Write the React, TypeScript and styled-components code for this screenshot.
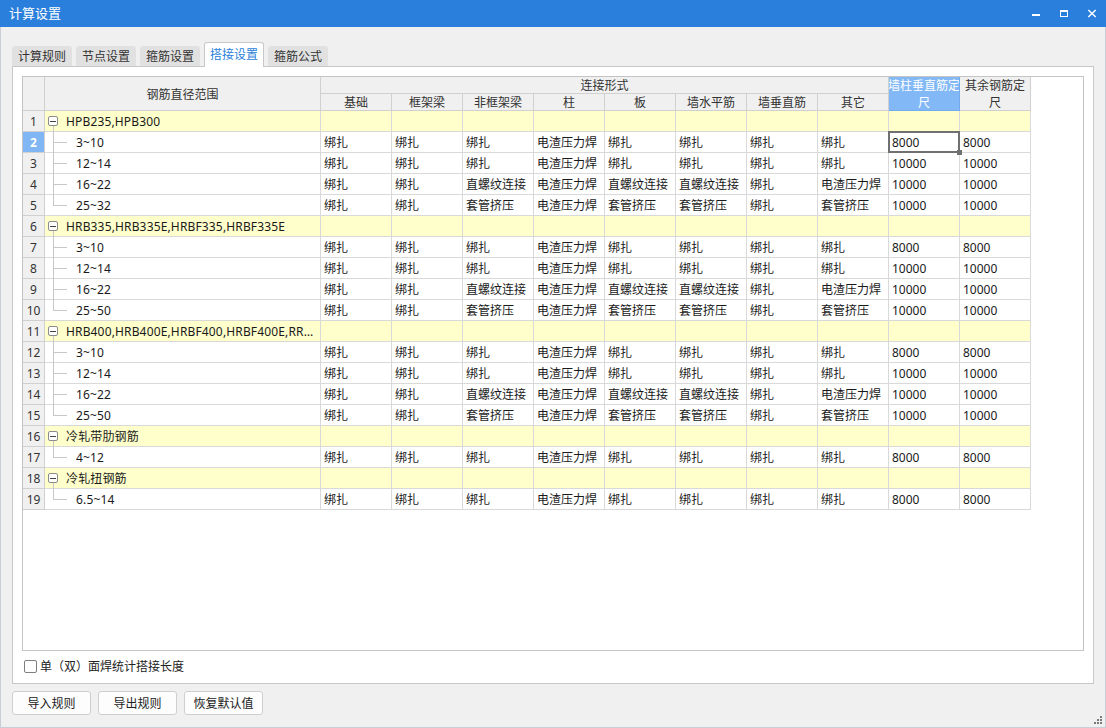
import React from 'react';
import styled, { createGlobalStyle, css } from 'styled-components';

const GlobalStyle = createGlobalStyle`
  html, body { margin: 0; padding: 0; width: 1106px; height: 728px; overflow: hidden; background: #f0f0f0; }
  body { font-family: "Noto Sans", "Noto Sans CJK SC", sans-serif; font-size: 12px; color: #222; }
  * { box-sizing: border-box; }
`;

const Window = styled.div`
  position: relative;
  width: 1106px;
  height: 728px;
  display: flex;
  flex-direction: column;
  background: #f0f0f0;
`;

const TitleBar = styled.div`
  height: 27px;
  flex: none;
  display: flex;
  align-items: center;
  background: #2b7fdc;
  color: #fff;
  font-size: 13px;
  padding-left: 9px;
`;

const TitleText = styled.span`
  line-height: 27px;
`;

const Controls = styled.div`
  margin-left: auto;
  display: flex;
  height: 27px;
`;

const Control = styled.div`
  width: 28px;
  height: 27px;
  display: flex;
`;

const Body = styled.div`
  flex: 1;
  display: flex;
  flex-direction: column;
  border: 1px solid #c9ced6;
  border-top: none;
  padding: 15px 11px 0 11px;
`;

const TabBar = styled.div`
  height: 24px;
  display: flex;
  align-items: flex-end;
  gap: 4px;
`;

const Tab = styled.div<{ $active?: boolean }>`
  height: 20px;
  width: 60px;
  line-height: 21px;
  text-align: center;
  font-size: 12px;
  color: #333;
  background: #e1e1e1;
  border-radius: 3px 3px 0 0;
  ${(p) =>
    p.$active &&
    css`
      position: relative;
      z-index: 1;
      height: 25px;
      line-height: 24px;
      margin-bottom: -1px;
      background: #fff;
      color: #2a7fd9;
      border: 1px solid #c8c8c8;
      border-bottom: none;
    `}
`;

const Panel = styled.div`
  height: 618px;
  border: 1px solid #c8c8c8;
  background: #fff;
  padding: 9px 9px 2px 9px;
  display: flex;
  flex-direction: column;
`;

const Sheet = styled.div`
  height: 575px;
  flex: none;
  border: 1px solid #c4c4c4;
  background: #fff;
  overflow: hidden;
`;

const SheetGrid = styled.div`
  display: grid;
  grid-template-columns: 22px 276px repeat(10, 71px);
  grid-template-rows: 17px 17px;
  grid-auto-rows: 21px;
  width: 1008px;
`;

const HeadCell = styled.div<{ $col: string; $row: string; $selected?: boolean }>`
  grid-column: ${(p) => p.$col};
  grid-row: ${(p) => p.$row};
  background: ${(p) => (p.$selected ? '#82b8f6' : '#f0f0f0')};
  color: ${(p) => (p.$selected ? '#fff' : '#333')};
  border-right: 1px solid ${(p) => (p.$selected ? '#72acef' : '#d0d0d0')};
  border-bottom: 1px solid ${(p) => (p.$selected ? '#72acef' : '#d0d0d0')};
  display: flex;
  flex-direction: column;
  align-items: center;
  justify-content: center;
  line-height: 17px;
  padding-top: 1px;
  white-space: nowrap;
  overflow: hidden;
`;

const HeadLine = styled.span`
  display: block;
`;

const RowNum = styled.div<{ $selected?: boolean }>`
  background: ${(p) => (p.$selected ? '#80b6f4' : '#f0f0f0')};
  color: ${(p) => (p.$selected ? '#fff' : '#333')};
  font-weight: ${(p) => (p.$selected ? 700 : 400)};
  border-right: 1px solid #d0d0d0;
  border-bottom: 1px solid #d0d0d0;
  text-align: center;
  line-height: 22px;
  font-size: 12px;
  overflow: hidden;
`;

const Cell = styled.div<{ $group?: boolean; $selected?: boolean }>`
  background: ${(p) => (p.$group ? '#ffffcc' : '#fff')};
  border-right: 1px solid #d9d9d9;
  border-bottom: 1px solid #d9d9d9;
  padding-left: 3px;
  line-height: 22px;
  white-space: nowrap;
  overflow: hidden;
  color: #1a1a1a;
  ${(p) =>
    p.$selected &&
    css`
      position: relative;
      z-index: 1;
      overflow: visible;
      &::after {
        content: '';
        position: absolute;
        left: -1px;
        top: -1px;
        right: -1px;
        bottom: -1px;
        border: 2px solid #707070;
      }
      &::before {
        content: '';
        position: absolute;
        right: -3px;
        bottom: -3px;
        width: 5px;
        height: 5px;
        background: #707070;
        z-index: 2;
      }
    `}
`;

const RangeCell = styled.div<{ $kind: 'group' | 'child' | 'last' }>`
  position: relative;
  display: flex;
  align-items: center;
  min-width: 0;
  background: ${(p) => (p.$kind === 'group' ? '#ffffcc' : '#fff')};
  border-right: 1px solid #d9d9d9;
  border-bottom: 1px solid #d9d9d9;
  white-space: nowrap;
  color: #1a1a1a;
  &::before {
    content: '';
    position: absolute;
    left: 8px;
    width: 1px;
    background: #c8c8c8;
    ${(p) =>
      p.$kind === 'group'
        ? css`
            top: 15px;
            bottom: -1px;
          `
        : p.$kind === 'child'
        ? css`
            top: 0;
            bottom: -1px;
          `
        : css`
            top: 0;
            height: 10px;
          `}
  }
  ${(p) =>
    p.$kind !== 'group' &&
    css`
      &::after {
        content: '';
        position: absolute;
        left: 8px;
        top: 10px;
        width: 14px;
        height: 1px;
        background: #c8c8c8;
      }
    `}
`;

const MinusBox = styled.span`
  flex: none;
  width: 10px;
  height: 10px;
  margin-left: 3px;
  border: 1px solid #8c8c8c;
  border-radius: 2px;
  background: #fff;
  display: flex;
  align-items: center;
  justify-content: center;
  &::before {
    content: '';
    width: 6px;
    height: 1px;
    background: #444;
  }
`;

const RangeText = styled.span<{ $child?: boolean }>`
  margin-left: ${(p) => (p.$child ? '31px' : '8px')};
  padding-right: 4px;
  overflow: hidden;
  text-overflow: ellipsis;
  min-width: 0;
  line-height: 22px;
  height: 20px;
  letter-spacing: 0.15px;
`;

const CheckRow = styled.div`
  height: 30px;
  display: flex;
  align-items: center;
  padding-left: 2px;
`;

const CheckBox = styled.span`
  width: 13px;
  height: 13px;
  border: 1px solid #7e7e7e;
  border-radius: 2px;
  background: #fff;
`;

const CheckLabel = styled.span`
  margin-left: 3px;
  font-size: 12px;
  color: #222;
`;

const ButtonRow = styled.div`
  display: flex;
  gap: 7px;
  margin-top: 7px;
`;

const Button = styled.div`
  width: 79px;
  height: 24px;
  border: 1px solid #cfcfcf;
  border-radius: 3px;
  background: #fdfdfd;
  font-size: 12px;
  color: #222;
  line-height: 23px;
  text-align: center;
`;

const Grip = styled.svg`
  position: absolute;
  right: 4px;
  bottom: 4px;
`;

type Row =
  | { kind: 'group'; label: string }
  | { kind: 'child' | 'last'; label: string; vals: string[] };

const A = ['绑扎', '绑扎', '绑扎', '电渣压力焊', '绑扎', '绑扎', '绑扎', '绑扎'];
const B = ['绑扎', '绑扎', '直螺纹连接', '电渣压力焊', '直螺纹连接', '直螺纹连接', '绑扎', '电渣压力焊'];
const C = ['绑扎', '绑扎', '套管挤压', '电渣压力焊', '套管挤压', '套管挤压', '绑扎', '套管挤压'];

const groupRows = (label: string, last: string): Row[] => [
  { kind: 'group', label },
  { kind: 'child', label: '3~10', vals: [...A, '8000', '8000'] },
  { kind: 'child', label: '12~14', vals: [...A, '10000', '10000'] },
  { kind: 'child', label: '16~22', vals: [...B, '10000', '10000'] },
  { kind: 'last', label: last, vals: [...C, '10000', '10000'] },
];

const rows: Row[] = [
  ...groupRows('HPB235,HPB300', '25~32'),
  ...groupRows('HRB335,HRB335E,HRBF335,HRBF335E', '25~50'),
  ...groupRows('HRB400,HRB400E,HRBF400,HRBF400E,RRB400', '25~50'),
  { kind: 'group', label: '冷轧带肋钢筋' },
  { kind: 'last', label: '4~12', vals: [...A, '8000', '8000'] },
  { kind: 'group', label: '冷轧扭钢筋' },
  { kind: 'last', label: '6.5~14', vals: [...A, '8000', '8000'] },
];

const subHeads = ['基础', '框架梁', '非框架梁', '柱', '板', '墙水平筋', '墙垂直筋', '其它'];
const tabs = ['计算规则', '节点设置', '箍筋设置', '搭接设置', '箍筋公式'];

const SEL_ROW = 1;
const SEL_COL = 8;

export default function App() {
  return (
    <>
      <GlobalStyle />
      <Window>
        <TitleBar>
          <TitleText>计算设置</TitleText>
          <Controls>
            <Control>
              <svg width="28" height="27" viewBox="0 0 28 27">
                <rect x="10" y="14" width="8" height="2" fill="#fff" />
              </svg>
            </Control>
            <Control>
              <svg width="28" height="27" viewBox="0 0 28 27">
                <rect x="10.5" y="10.5" width="7" height="6" fill="none" stroke="#fff" strokeWidth="1" />
                <rect x="10" y="10" width="8" height="2" fill="#fff" />
              </svg>
            </Control>
            <Control>
              <svg width="28" height="27" viewBox="0 0 28 27">
                <path d="M10.3 10 L17.7 17 M17.7 10 L10.3 17" stroke="#fff" strokeWidth="1.4" fill="none" />
              </svg>
            </Control>
          </Controls>
        </TitleBar>
        <Body>
          <TabBar>
            {tabs.map((t) => (
              <Tab key={t} $active={t === '搭接设置'}>
                {t}
              </Tab>
            ))}
          </TabBar>
          <Panel>
            <Sheet>
              <SheetGrid>
                <HeadCell $col="1" $row="1 / span 2" />
                <HeadCell $col="2" $row="1 / span 2">
                  钢筋直径范围
                </HeadCell>
                <HeadCell $col="3 / span 8" $row="1">
                  连接形式
                </HeadCell>
                {subHeads.map((h, i) => (
                  <HeadCell key={h} $col={String(3 + i)} $row="2">
                    {h}
                  </HeadCell>
                ))}
                <HeadCell $col="11" $row="1 / span 2" $selected>
                  <HeadLine>墙柱垂直筋定</HeadLine>
                  <HeadLine>尺</HeadLine>
                </HeadCell>
                <HeadCell $col="12" $row="1 / span 2">
                  <HeadLine>其余钢筋定</HeadLine>
                  <HeadLine>尺</HeadLine>
                </HeadCell>
                {rows.map((r, ri) => (
                  <React.Fragment key={ri}>
                    <RowNum $selected={ri === SEL_ROW}>{ri + 1}</RowNum>
                    {r.kind === 'group' ? (
                      <>
                        <RangeCell $kind="group">
                          <MinusBox />
                          <RangeText>{r.label}</RangeText>
                        </RangeCell>
                        {Array.from({ length: 10 }).map((_, ci) => (
                          <Cell key={ci} $group />
                        ))}
                      </>
                    ) : (
                      <>
                        <RangeCell $kind={r.kind}>
                          <RangeText $child>{r.label}</RangeText>
                        </RangeCell>
                        {r.vals.map((v, ci) => (
                          <Cell key={ci} $selected={ri === SEL_ROW && ci === SEL_COL}>
                            {v}
                          </Cell>
                        ))}
                      </>
                    )}
                  </React.Fragment>
                ))}
              </SheetGrid>
            </Sheet>
            <CheckRow>
              <CheckBox />
              <CheckLabel>单（双）面焊统计搭接长度</CheckLabel>
            </CheckRow>
          </Panel>
          <ButtonRow>
            <Button>导入规则</Button>
            <Button>导出规则</Button>
            <Button>恢复默认值</Button>
          </ButtonRow>
        </Body>
        <Grip width="8" height="8" viewBox="0 0 8 8">
          <rect x="6" y="0" width="2" height="2" fill="#7a7a7a" />
          <rect x="3" y="3" width="2" height="2" fill="#7a7a7a" />
          <rect x="6" y="3" width="2" height="2" fill="#7a7a7a" />
          <rect x="0" y="6" width="2" height="2" fill="#7a7a7a" />
          <rect x="3" y="6" width="2" height="2" fill="#7a7a7a" />
          <rect x="6" y="6" width="2" height="2" fill="#7a7a7a" />
        </Grip>
      </Window>
    </>
  );
}
